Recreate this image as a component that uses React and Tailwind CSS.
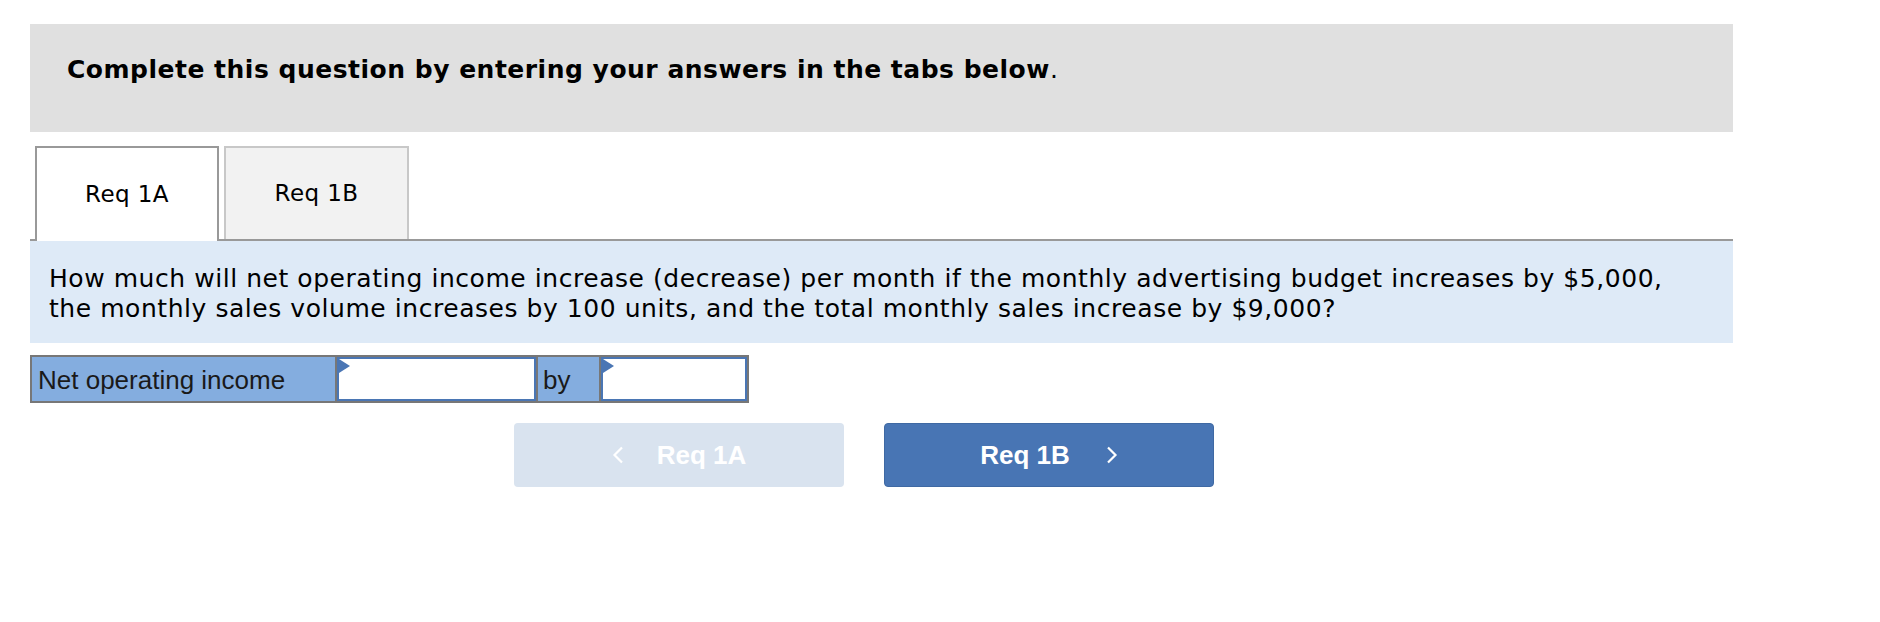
import React from 'react';

const verdana = { fontFamily: '"DejaVu Sans", Verdana, sans-serif' };
const arial = { fontFamily: '"Liberation Sans", Arial, sans-serif' };

const Chevron = ({ dir = 'right' }) => (
  <svg width="12" height="18" viewBox="0 0 12 18" className="shrink-0">
    <path
      d={dir === 'right' ? 'M2 1.5 L9.5 9 L2 16.5' : 'M10 1.5 L2.5 9 L10 16.5'}
      fill="none"
      stroke="white"
      strokeWidth="2.2"
    />
  </svg>
);

const AnswerInput = ({ width }) => (
  <div className={`relative h-full ${width} border-2 border-[#4a76b4] bg-white`}>
    {/* little blue marker in the corner */}
    <svg width="11" height="14" viewBox="0 0 11 14" className="absolute left-0 top-0">
      <path d="M0 0 L11 7 L0 14 Z" fill="#4a76b4" />
    </svg>
  </div>
);

export default function App() {
  return (
    <div className="w-full h-[622px] bg-white pt-[24px] pl-[30px]">
      <div className="w-[1703px]">
        {/* Instructions */}
        <div className="h-[108px] bg-[#e0e0e0] pl-[37px] pt-[30px]">
          <p className="text-[25px] leading-[32px] font-bold tracking-[0.5px] text-black" style={verdana}>
            Complete this question by entering your answers in the tabs below<span className="font-normal">.</span>
          </p>
        </div>

        {/* Tabs */}
        <div className="mt-[14px] flex items-end gap-[5px] pl-[5px] border-b-2 border-[#999999] h-[95px]">
          <div
            className="-mb-[2px] h-[95px] w-[184px] bg-white border-2 border-b-0 border-[#999999] flex items-center justify-center text-[23px] tracking-[0.4px] text-black"
            style={verdana}
          >
            Req 1A
          </div>
          <div
            className="h-[93px] w-[185px] bg-[#f2f2f2] border-2 border-b-0 border-[#c8c8c8] flex items-center justify-center text-[23px] tracking-[0.4px] text-black"
            style={verdana}
          >
            Req 1B
          </div>
        </div>

        {/* Question */}
        <div className="h-[102px] bg-[#deeaf7] pl-[19px] pt-[23px]">
          <p className="text-[25px] leading-[30px] tracking-[0.55px] text-black" style={verdana}>
            How much will net operating income increase (decrease) per month if the monthly advertising budget increases by $5,000,
            <br />
            the monthly sales volume increases by 100 units, and the total monthly sales increase by $9,000?
          </p>
        </div>

        {/* Answer row */}
        <div
          className="mt-[12px] flex h-[48px] w-[719px] border-2 border-[#777777] bg-[#777777] gap-[2px] text-[26px] text-[#1a1a1a]"
          style={arial}
        >
          <div className="w-[303px] bg-[#84addf] flex items-center pl-[6px] pt-[2px]">Net operating income</div>
          <AnswerInput width="w-[199px]" />
          <div className="w-[61px] bg-[#84addf] flex items-center pl-[5px] pt-[2px]">by</div>
          <AnswerInput width="w-[146px]" />
        </div>

        {/* Navigation */}
        <div className="mt-[20px] ml-[484px] flex gap-[40px] text-[26px] font-bold text-white" style={arial}>
          <div className="h-[64px] w-[330px] rounded-[4px] bg-[#d9e3ef] flex items-center justify-center gap-[33px]">
            <Chevron dir="left" />
            <span>Req 1A</span>
          </div>
          <div className="h-[64px] w-[330px] rounded-[4px] bg-[#4875b4] border border-[#3f69a3] flex items-center justify-center gap-[36px]">
            <span>Req 1B</span>
            <Chevron dir="right" />
          </div>
        </div>
      </div>
    </div>
  );
}
